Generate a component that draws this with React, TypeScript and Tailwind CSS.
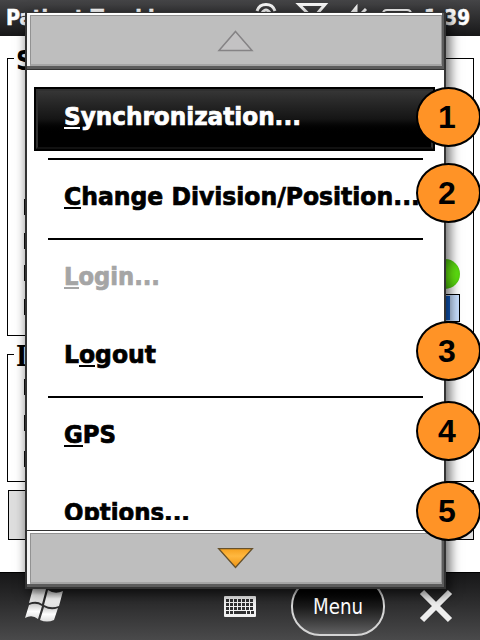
import React from "react";

const UI = "font-['DejaVu_Sans_Condensed','DejaVu_Sans',sans-serif] [font-stretch:condensed]";

type ItemProps = { before?: string; hot: string; after: string; width: string; tone?: string };

function Label({ before = "", hot, after, width, tone = "text-black" }: ItemProps) {
  return (
    <svg className={`block h-[34px] w-[380px] shrink-0 overflow-hidden ${tone} ${UI} text-[25.5px] font-bold`}>
      <text x="0" y="25" fill="currentColor" stroke="currentColor" strokeWidth="0.7" textLength={width} lengthAdjust="spacingAndGlyphs">
        {before}
        <tspan>{hot}</tspan>
        {after}
      </text>
    </svg>
  );
}

function Row({ underline, ...p }: ItemProps & { underline: string }) {
  return (
    <div className="h-[78px] shrink-0 pl-[37px] pt-5">
      <div className="relative">
        <Label {...p} />
        <span className={`absolute top-[27px] h-[2px] ${underline}`} />
      </div>
    </div>
  );
}

function Separator() {
  return <div className="ml-[21px] h-[2px] w-[375px] shrink-0 bg-black" />;
}

function ScrollBar({ down = false }: { down?: boolean }) {
  return (
    <div className="relative h-full border-b-[3px] border-r-2 border-b-[#5c5c5c] border-r-[#5c5c5c] bg-[#bebebe]">
      <div className="flex h-full items-center justify-center border-l-[3px] border-t-2 border-l-[#f4f4f4] border-t-white">
        <div className="h-full w-full border border-b-2 border-[#929292] border-b-[#a5a5a5] pt-[14px]">
          <svg className="mx-auto block h-[24px] w-[38px]" viewBox="0 0 38 24">
            <defs>
              <linearGradient id="amber" x2="0" y2="1">
                <stop offset="0" stopColor="#f5a01d" />
                <stop offset=".4" stopColor="#ffb840" />
                <stop offset="1" stopColor="#ee9210" />
              </linearGradient>
            </defs>
            {down ? (
              <path d="M1.5 .5h34L18.5 19.5z" fill="url(#amber)" stroke="#66512c" strokeWidth="1.3" />
            ) : (
              <path d="M18.5 1.5 35 20.5H2z" fill="#c3c2c3" stroke="#858385" strokeWidth="1.5" />
            )}
          </svg>
        </div>
      </div>
    </div>
  );
}

function Badge({ n, top }: { n: number; top: string }) {
  return (
    <div className={`absolute left-[416px] flex h-[60px] w-[65px] items-center justify-center rounded-[50%] border-2 border-black bg-[#ff9326] pr-[3px] font-['Liberation_Sans',Arial,sans-serif] text-[32px] font-bold leading-none text-black ${top}`}>
      {n}
    </div>
  );
}

function Ticks({ tops }: { tops: string[] }) {
  return (
    <div className="flex flex-col pl-[16px]">
      {tops.map((t, i) => (
        <div key={i} className={`h-4 w-2 bg-[#111] ${t}`} />
      ))}
    </div>
  );
}

export default function App() {
  return (
    <div className={`relative flex h-[640px] w-[480px] flex-col overflow-hidden bg-white text-black ${UI}`}>
      <header className="relative h-9 shrink-0">
        <svg className="block h-9 w-[480px] text-[22px] font-bold" viewBox="0 0 480 36">
          <defs>
            <linearGradient id="head" x2="0" y2="1">
              <stop offset="0" stopColor="#454547" />
              <stop offset="1" stopColor="#171718" />
            </linearGradient>
          </defs>
          <rect width="480" height="36" fill="url(#head)" />
          <text x="6" y="25" fill="white" stroke="white" strokeWidth="0.5" textLength="176" lengthAdjust="spacingAndGlyphs">Patient Tracking</text>
          <g fill="none" stroke="#f5f5f5" strokeWidth="3">
            <path d="M257 11a9.5 9.5 0 0 1 18 0M262 13q4-6 8 0M299 4.5h26l-12 14z" />
            <path d="m351 14 5-6v6M361 14l5-5" />
            <path d="M383 14q0-4 4-4h20q4 0 4 4" strokeWidth="2" />
          </g>
          <text x="424" y="25" fill="white" stroke="white" strokeWidth="0.5" textLength="46" lengthAdjust="spacingAndGlyphs">1:39</text>
        </svg>
      </header>

      <main className="flex h-[536px] shrink-0 flex-col pl-[7px] pr-[6px] pt-[22px]">
        <section className="flex h-[278px] shrink-0 justify-between border border-black">
          <div>
            <div className="-mt-[15px] ml-[6px] h-[33px] w-[30px] bg-white pl-[2px] text-[27px] font-bold leading-[33px]">S</div>
            <Ticks tops={["mt-[122px]", "mt-[18px]", "mt-4", "mt-[18px]"]} />
          </div>
          <div className="mr-[13px] mt-[200px] flex flex-col items-end">
            <div className="h-[30px] w-[30px] rounded-full bg-[radial-gradient(circle,#70ff10_20%,#5ce010_60%,#3a9c08)]" />
            <div className="mt-[5px] h-7 w-10 border border-black bg-[#c9e0ff] p-px">
              <div className="h-full w-[28px] bg-[#1062d0]" />
            </div>
          </div>
        </section>
        <section className="mt-[18px] h-[128px] shrink-0 border border-black">
          <div className="-mt-[15px] ml-[6px] h-[33px] w-[30px] bg-white pl-[2px] font-['DejaVu_Serif',serif] text-[27px] font-bold leading-[33px]">I</div>
          <Ticks tops={["mt-[6px]", "mt-5", "mt-5"]} />
        </section>
        <div className="ml-px mt-2 h-[50px] shrink-0 border border-black bg-[#dedede]" />
      </main>

      <footer className="flex h-[68px] shrink-0 items-start border-t border-black bg-gradient-to-b from-[#171718] to-[#4a4a4b]">
        <svg className="ml-[24px] mt-[13px] h-[38px] w-[40px] shrink-0" viewBox="0 0 40 38">
          <defs>
            <linearGradient id="flag" x2="0" y2="1">
              <stop offset="0" stopColor="#c8c8c8" />
              <stop offset=".5" stopColor="#ffffff" />
              <stop offset="1" stopColor="#dedede" />
            </linearGradient>
          </defs>
          <g fill="url(#flag)">
            <path d="M9 2q7-4 13 1l-4 15q-5-4-13-1z" />
            <path d="M24 4q7 5 15 1l-4 15q-8 3-15-1z" />
            <path d="M5 19q7-3 13 1l-4 13q-6-5-13-1z" />
            <path d="M20 21q7 4 14 1l-4 12q-7 3-14 0z" />
          </g>
        </svg>
        <svg className="ml-[160px] mt-[23px] h-[22px] w-8 shrink-0" viewBox="0 0 32 22">
          <rect width="32" height="21" rx="1" fill="#f2f2f2" />
          <path d="M2 4.5h28M2 8.5h28M2 12.5h28" stroke="#303031" strokeWidth="3" strokeDasharray="3 1" />
          <path d="M2 16.5h3m1 0h3m1 0h12m1 0h3m1 0h3" stroke="#303031" strokeWidth="3" />
        </svg>
        <div className="ml-[35px] mt-[4px] flex h-[59px] w-[94px] shrink-0 items-center justify-center rounded-[29px] border-2 border-[#d5d5d5] bg-gradient-to-b from-black via-[#1a1a1a] to-[#626263]">
          <svg className="h-8 w-[54px] text-[21px]">
            <text x="2" y="23" fill="white" textLength="50" lengthAdjust="spacingAndGlyphs">Menu</text>
          </svg>
        </div>
        <svg className="ml-[33px] mt-[15px] h-9 w-9 shrink-0" viewBox="0 0 36 36">
          <path d="m4 4 28 28M32 4 4 32" stroke="#eeeeee" strokeWidth="6" />
        </svg>
      </footer>

      <div className="absolute left-[25px] top-[12px] flex h-[577px] w-[421px] flex-col border-2 border-t border-[#333] bg-white shadow-[3px_4px_11px_1px_rgba(0,0,0,0.6)]">
        <div className="h-[57px] shrink-0 border-b border-[#333]">
          <ScrollBar />
        </div>
        <div className="flex h-[450px] shrink-0 flex-col overflow-hidden pt-[10px]">
          <div className="h-[78px] shrink-0 pl-[7px] pt-[7px]">
            <div className="relative h-16 w-[401px] border-2 border-black bg-gradient-to-b from-[#383838] via-[#151515] via-50% to-black to-75%">
              <div className="h-full border-2 border-[#303030] border-b-[#111] pl-[26px] pt-[9px]">
                <div className="relative">
                  <Label hot="S" after="ynchronization..." width="237" tone="text-white" />
                  <span className="absolute left-0 top-[27px] h-[2px] w-4 bg-white" />
                </div>
              </div>
            </div>
          </div>
          <Separator />
          <Row hot="C" after="hange Division/Position..." width="356" underline="left-0 w-[17px] bg-black" />
          <Separator />
          <Row hot="L" after="ogin..." width="96" tone="text-[#a5a5a5]" underline="left-0 w-[15px] bg-[#a5a5a5]" />
          <Row before="L" hot="o" after="gout" width="92" underline="left-[15px] w-4 bg-black" />
          <Separator />
          <Row hot="G" after="PS" width="52" underline="left-0 w-[19px] bg-black" />
          <Row hot="O" after="ptions..." width="126" underline="left-0 w-[19px] bg-black" />
        </div>
        <div className="mt-[10px] min-h-0 flex-1 border-t border-[#333]">
          <ScrollBar down />
        </div>
      </div>

      <Badge n={1} top="top-[87px]" />
      <Badge n={2} top="top-[163px]" />
      <Badge n={3} top="top-[321px]" />
      <Badge n={4} top="top-[401px]" />
      <Badge n={5} top="top-[481px]" />
    </div>
  );
}
